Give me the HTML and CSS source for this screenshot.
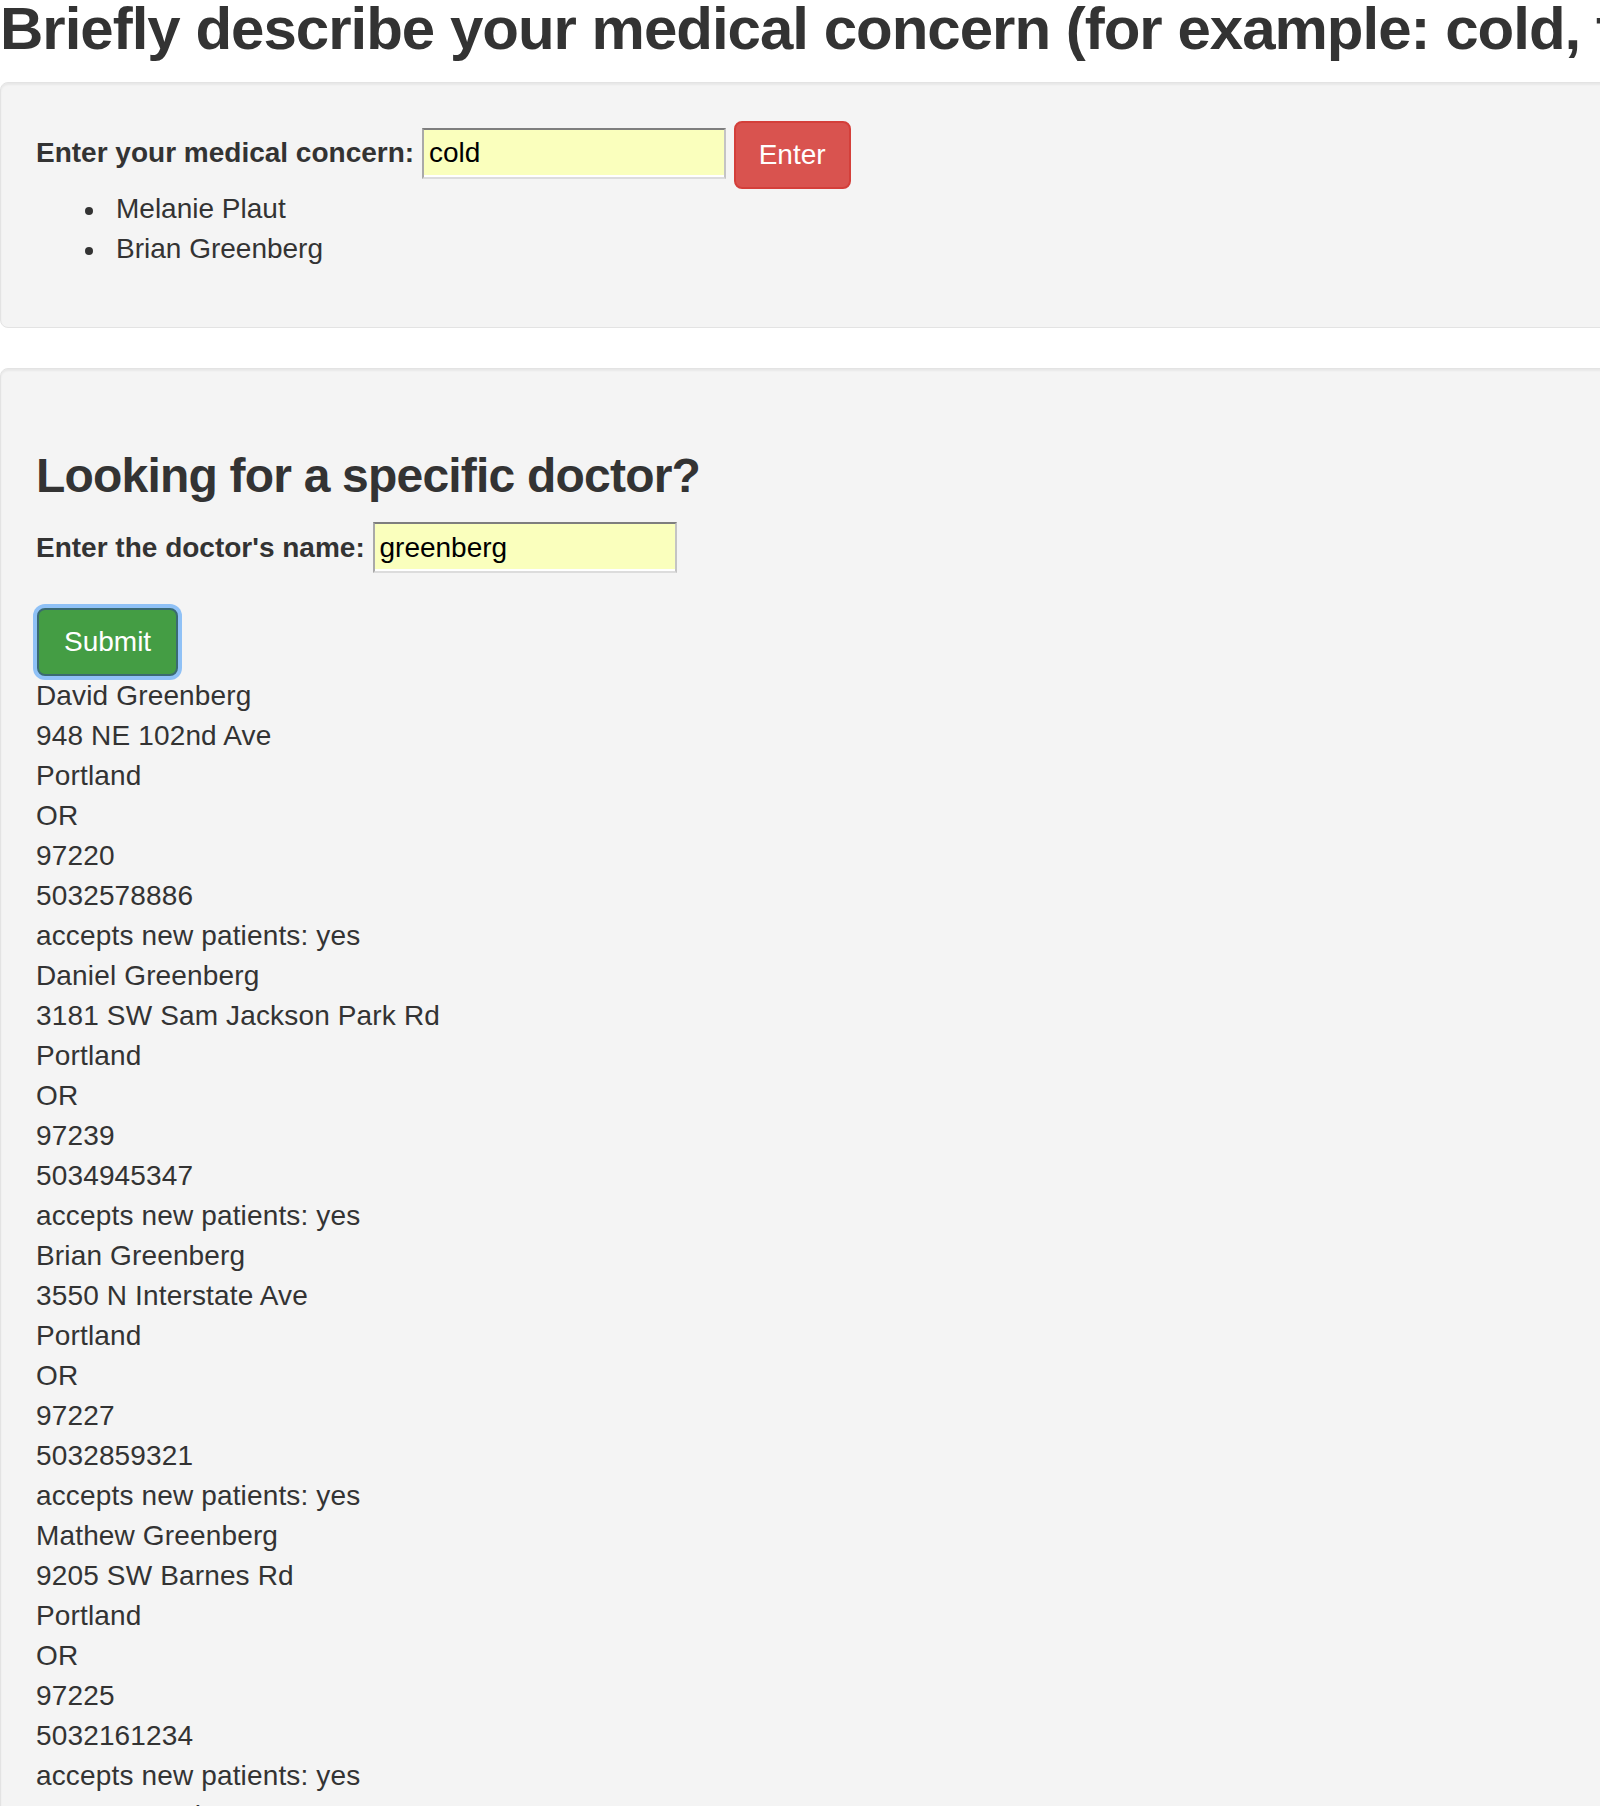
FILE: index.html
```html
<!DOCTYPE html>
<html lang="en">
<head>
<meta charset="utf-8">
<title>Find a doctor</title>
<link rel="stylesheet" href="styles.css">
</head>
<body>
<h1 class="page-title">Briefly describe your medical concern (for example: cold, flu, allergies)</h1>

<div class="well">
  <form class="concern-form">
    <label class="field-label" for="concern">Enter your medical concern:</label>
    <input class="field-input" id="concern" type="text" value="cold">
    <button type="button" class="btn btn-danger">Enter</button>
  </form>
  <ul class="result-list">
    <li>Melanie Plaut</li>
    <li>Brian Greenberg</li>
  </ul>
</div>

<div class="well">
  <h3 class="section-title">Looking for a specific doctor?</h3>
  <form class="doctor-form">
    <label class="field-label" for="doctor">Enter the doctor's name:</label>
    <input class="field-input" id="doctor" type="text" value="greenberg">
    <div class="submit-row">
      <button type="button" class="btn btn-success btn-focus">Submit</button>
    </div>
  </form>
  <div class="doctors">
    <div class="doctor">
      <div class="line">David Greenberg</div>
      <div class="line">948 NE 102nd Ave</div>
      <div class="line">Portland</div>
      <div class="line">OR</div>
      <div class="line">97220</div>
      <div class="line">5032578886</div>
      <div class="line">accepts new patients: yes</div>
    </div>
    <div class="doctor">
      <div class="line">Daniel Greenberg</div>
      <div class="line">3181 SW Sam Jackson Park Rd</div>
      <div class="line">Portland</div>
      <div class="line">OR</div>
      <div class="line">97239</div>
      <div class="line">5034945347</div>
      <div class="line">accepts new patients: yes</div>
    </div>
    <div class="doctor">
      <div class="line">Brian Greenberg</div>
      <div class="line">3550 N Interstate Ave</div>
      <div class="line">Portland</div>
      <div class="line">OR</div>
      <div class="line">97227</div>
      <div class="line">5032859321</div>
      <div class="line">accepts new patients: yes</div>
    </div>
    <div class="doctor">
      <div class="line">Mathew Greenberg</div>
      <div class="line">9205 SW Barnes Rd</div>
      <div class="line">Portland</div>
      <div class="line">OR</div>
      <div class="line">97225</div>
      <div class="line">5032161234</div>
      <div class="line">accepts new patients: yes</div>
    </div>
    <div class="doctor">
      <div class="line">Laura Greenberg</div>
      <div class="line">Portland</div>
    </div>
  </div>
</div>
</body>
</html>
```

FILE: styles.css
```css
html, body {
  overflow-x: hidden;
}

body {
  margin: 0;
  background: #ffffff;
  color: #333333;
  font-family: "Liberation Sans", Arial, Helvetica, sans-serif;
  font-size: 28px;
  line-height: 40px;
}

.page-title {
  margin: -4px 0 20px 0;
  font-size: 60px;
  line-height: 66px;
  font-weight: 700;
  letter-spacing: -1px;
  white-space: nowrap;
  color: #333333;
}

.well {
  margin: 0 -12px 40px 0;
  padding: 38px 35px;
  background: #f4f4f4;
  border: 1px solid #e3e3e3;
  border-radius: 8px;
  box-shadow: inset 0 2px 2px rgba(0, 0, 0, 0.05);
  min-height: 40px;
}

.section-title {
  margin: 42px 0 20px 0;
  font-size: 48px;
  line-height: 53px;
  font-weight: 700;
  letter-spacing: -0.8px;
  color: #333333;
}

.concern-form,
.doctor-form {
  margin: 0;
}

.field-label {
  font-weight: 700;
  color: #333333;
}

.field-input {
  box-sizing: border-box;
  width: 304px;
  height: 51px;
  margin: 0;
  padding: 0 5px;
  font-family: "Liberation Sans", Arial, Helvetica, sans-serif;
  font-size: 28px;
  color: #000000;
  background: #faffbd;
  border-style: solid;
  border-width: 2px;
  border-top-color: #7e7e7e;
  border-left-color: #a9a9a9;
  border-right-color: #c4c4c4;
  border-bottom-color: #dcdcdc;
  box-shadow: inset 0 -2px 0 #ffffff;
  vertical-align: baseline;
  outline: none;
}

.btn {
  display: inline-block;
  box-sizing: border-box;
  height: 68px;
  margin: 0;
  padding: 12px 23px;
  font-family: "Liberation Sans", Arial, Helvetica, sans-serif;
  font-size: 28px;
  line-height: 40px;
  font-weight: 400;
  color: #ffffff;
  border: 2px solid transparent;
  border-radius: 8px;
  vertical-align: middle;
  cursor: pointer;
}

.btn-danger {
  background: #d9534f;
  border-color: #d43f3a;
}

.btn-success {
  background: #449d44;
  border-color: #3a6a72;
  padding: 12px 25px;
}

.btn-focus {
  box-shadow: 0 0 0 4px #8fc1f6;
  margin-left: 1px;
}

.submit-row {
  margin-top: 35px;
}

.result-list {
  margin: 0 0 20px 0;
  padding-left: 80px;
  list-style: none;
}

.result-list li {
  position: relative;
  line-height: 40px;
}

.result-list li::before {
  content: "";
  position: absolute;
  left: -31px;
  top: 18px;
  width: 8px;
  height: 8px;
  border-radius: 50%;
  background: #333333;
}

.doctors {
  margin: 0;
}

.line {
  line-height: 40px;
  letter-spacing: 0.15px;
  white-space: nowrap;
}
```
